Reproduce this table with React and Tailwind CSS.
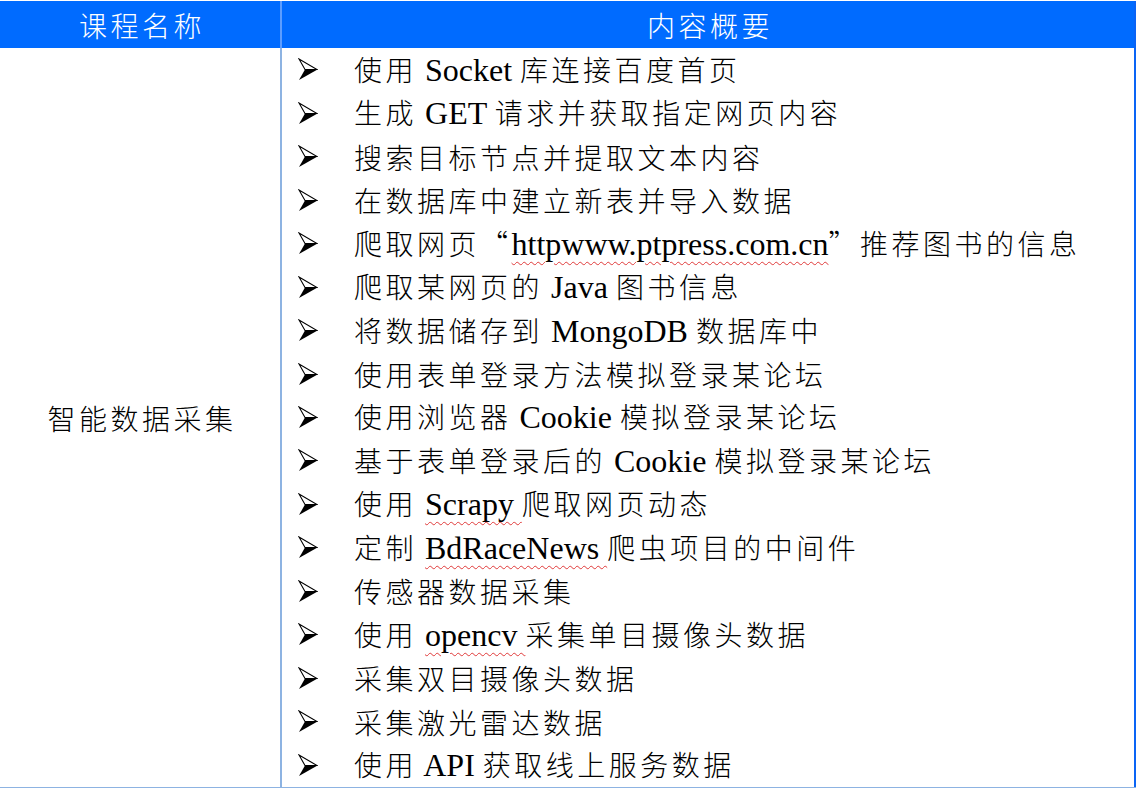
import React from 'react';

const cjk = "font-['Noto_Sans_CJK_SC',sans-serif] text-[28px] tracking-[3.5px] font-light leading-none";
const latin = "font-['Liberation_Serif','Noto_Sans_CJK_SC',serif] text-[32px] leading-none";
const wavy = "underline decoration-wavy decoration-[#e03a3a] decoration-1 underline-offset-[6px]";

const items = [
    ['使用', ' Socket ', '库连接百度首页'],
    ['生成', ' GET ', '请求并获取指定网页内容'],
    ['搜索目标节点并提取文本内容'],
    ['在数据库中建立新表并导入数据'],
    ['爬取网页“', { u: 'httpwww.ptpress.com.cn' }, '”推荐图书的信息'],
    ['爬取某网页的', ' Java ', '图书信息'],
    ['将数据储存到', ' MongoDB ', '数据库中'],
    ['使用表单登录方法模拟登录某论坛'],
    ['使用浏览器', ' Cookie ', '模拟登录某论坛'],
    ['基于表单登录后的', ' Cookie ', '模拟登录某论坛'],
    ['使用', ' ', { u: 'Scrapy ' }, '爬取网页动态'],
    ['定制', ' ', { u: 'BdRaceNews ' }, '爬虫项目的中间件'],
    ['传感器数据采集'],
    ['使用', ' ', { u: 'opencv ' }, '采集单目摄像头数据'],
    ['采集双目摄像头数据'],
    ['采集激光雷达数据'],
    ['使用', ' API ', '获取线上服务数据'],
];

const isCjk = (s) => /[\u4e00-\u9fff“”]/.test(s);

function Segment({ seg }) {
    if (typeof seg === 'object') {
        return <span className={latin + ' ' + wavy}>{seg.u}</span>;
    }
    return <span className={isCjk(seg) ? cjk : latin}>{seg}</span>;
}

function Arrow() {
    return (
        <svg width="20" height="23" viewBox="0 0 20 23" className="shrink-0">
            <polygon points="1,1 19,11.5 7,11.5" fill="white" stroke="black" strokeWidth="1.1" strokeLinejoin="miter" />
            <polygon points="7,11.5 19.5,11.5 1,22" fill="black" />
        </svg>
    );
}

export default function App() {
    return (
        <div className="w-[1136px] h-[788px] bg-white flex flex-col overflow-hidden">
            <div className="h-px shrink-0" />
            <div className="flex h-[47px] shrink-0 bg-[#006bff] border-r-2 border-[#0a64f5]">
                <div className="w-[280px] flex items-center justify-center text-white">
                    <span className={cjk + ' pl-[4px]'}>课程名称</span>
                </div>
                <div className="w-[2px] bg-[#5c9dff]" />
                <div className="flex-1 flex items-center justify-center text-white">
                    <span className={cjk + ' pl-[4px]'}>内容概要</span>
                </div>
            </div>
            <div className="flex flex-1 min-h-0 border-r-2 border-[#0a64f5]">
                <div className="w-[280px] flex items-center justify-center text-black">
                    <span className={cjk + ' pl-[4px]'}>智能数据采集</span>
                </div>
                <div className="w-[2px] bg-[#8db3e2]" />
                <div className="flex-1 flex flex-col">
                    {items.map((segs, i) => (
                        <div key={i} className="flex-1 min-h-0 flex items-center pl-[16px] text-black whitespace-pre leading-none">
                            <Arrow />
                            <div className="ml-[36px] flex items-baseline">
                                {segs.map((s, j) => <Segment key={j} seg={s} />)}
                            </div>
                        </div>
                    ))}
                </div>
            </div>
            <div className="h-px shrink-0 bg-[#8db3e2]" />
        </div>
    );
}
